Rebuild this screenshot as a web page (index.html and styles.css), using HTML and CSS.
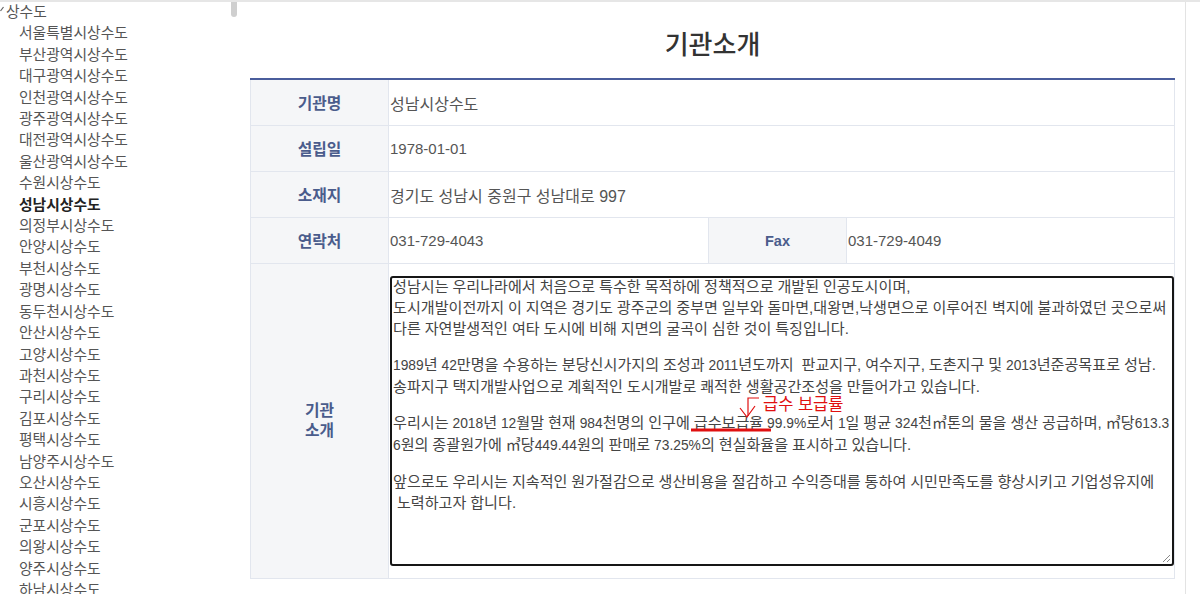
FILE: index.html
```html
<!DOCTYPE html>
<html lang="ko">
<head>
    <meta charset="UTF-8">
    <meta name="viewport" content="width=device-width, initial-scale=1.0">
    <title>기관소개</title>
    <link rel="stylesheet" href="styles.css">
</head>
<body>
    <div class="page">
        <aside class="tree">
            <ul class="tree-list">
                <li class="tree-root"><svg class="caret" width="5" height="8" viewBox="0 0 5 8"><path d="M0.5 6 L3.5 2" stroke="#666" stroke-width="1.2" fill="none"/></svg>상수도
                    <ul>
                        <li>서울특별시상수도</li>
                        <li>부산광역시상수도</li>
                        <li>대구광역시상수도</li>
                        <li>인천광역시상수도</li>
                        <li>광주광역시상수도</li>
                        <li>대전광역시상수도</li>
                        <li>울산광역시상수도</li>
                        <li>수원시상수도</li>
                        <li class="active">성남시상수도</li>
                        <li>의정부시상수도</li>
                        <li>안양시상수도</li>
                        <li>부천시상수도</li>
                        <li>광명시상수도</li>
                        <li>동두천시상수도</li>
                        <li>안산시상수도</li>
                        <li>고양시상수도</li>
                        <li>과천시상수도</li>
                        <li>구리시상수도</li>
                        <li>김포시상수도</li>
                        <li>평택시상수도</li>
                        <li>남양주시상수도</li>
                        <li>오산시상수도</li>
                        <li>시흥시상수도</li>
                        <li>군포시상수도</li>
                        <li>의왕시상수도</li>
                        <li>양주시상수도</li>
                        <li>하남시상수도</li>
                    </ul>
                </li>
            </ul>
            <div class="scroll-thumb"></div>
        </aside>

        <main class="main">
            <h1 class="title">기관소개</h1>
            <table class="info">
                <colgroup>
                    <col class="col-label">
                    <col class="col-value">
                    <col class="col-label">
                    <col>
                </colgroup>
                <tr>
                    <th>기관명</th>
                    <td colspan="3">성남시상수도</td>
                </tr>
                <tr>
                    <th>설립일</th>
                    <td colspan="3" class="num">1978-01-01</td>
                </tr>
                <tr>
                    <th>소재지</th>
                    <td colspan="3">경기도 성남시 중원구 성남대로 997</td>
                </tr>
                <tr>
                    <th>연락처</th>
                    <td class="num">031-729-4043</td>
                    <th class="latin">Fax</th>
                    <td class="num">031-729-4049</td>
                </tr>
                <tr class="intro">
                    <th>기관<br>소개</th>
                    <td colspan="3">
                        <div class="memo">
                            <div class="memo-box">
                                <p>성남시는 우리나라에서 처음으로 특수한 목적하에 정책적으로 개발된 인공도시이며,<br>도시개발이전까지 이 지역은 경기도 광주군의 중부면 일부와 돌마면,대왕면,낙생면으로 이루어진 벽지에 불과하였던 곳으로써<br>다른 자연발생적인 여타 도시에 비해 지면의 굴곡이 심한 것이 특징입니다.</p>
                                <p><span class="num">1989</span>년 <span class="num">42</span>만명을 수용하는 분당신시가지의 조성과 <span class="num">2011</span>년도까지&nbsp; 판교지구, 여수지구, 도촌지구 및 <span class="num">2013</span>년준공목표로 성남.<br>송파지구 택지개발사업으로 계획적인 도시개발로 쾌적한 생활공간조성을 만들어가고 있습니다.</p>
                                <p>우리시는 <span class="num">2018</span>년 <span class="num">12</span>월말 현재 <span class="num">984</span>천명의 인구에 급수보급율 <span class="num">99.9%</span>로서 <span class="num">1</span>일 평균 <span class="num">324</span>천㎥톤의 물을 생산 공급하며, ㎥당<span class="num">613.3</span><br><span class="num">6</span>원의 종괄원가에 ㎥당<span class="num">449.44</span>원의 판매로 <span class="num">73.25%</span>의 현실화율을 표시하고 있습니다.</p>
                                <p>앞으로도 우리시는 지속적인 원가절감으로 생산비용을 절감하고 수익증대를 통하여 시민만족도를 향상시키고 기업성유지에<br>&nbsp;노력하고자 합니다.</p>
                            </div>
                            <!-- red correction marks drawn over the text -->
                            <svg class="marks" width="785" height="290" viewBox="0 0 785 290">
                                <path d="M301 154 H381" stroke="#e01010" stroke-width="3" fill="none"/>
                                <path d="M369 122 H358 V140" stroke="#e01010" stroke-width="1.2" fill="none"/>
                                <path d="M350 132 L357 141 L365 130" stroke="#e01010" stroke-width="1.2" fill="none"/>
                            </svg>
                            <span class="note">급수 보급률</span>
                            <svg class="grip" width="9" height="9" viewBox="0 0 9 9">
                                <path d="M1 8 L8 1 M5 8 L8 5" stroke="#888" stroke-width="1" fill="none"/>
                            </svg>
                        </div>
                    </td>
                </tr>
            </table>
        </main>
    </div>
</body>
</html>
```

FILE: styles.css
```css
body {
    margin: 0;
    font-family: "Liberation Sans", "Noto Sans CJK KR", sans-serif;
    color: #444;
    background: #fff;
    border-top: 2px solid #e6e6e6;
    height: 592px;
    overflow: hidden;
}
.page {
    display: flex;
    height: 592px;
}
.tree {
    width: 238px;
    flex: none;
    position: relative;
    overflow: hidden;
}
.tree ul {
    list-style: none;
    margin: 0;
    padding: 0;
}
.tree-list {
    margin-top: -7px;
    font-size: 14.8px;
    line-height: 21.4px;
    color: #555;
}
.tree-root {
    padding-left: 7px;
}
.tree-root ul {
    padding-left: 12px;
}
.caret {
    margin-left: -7px;
    margin-right: 1px;
    vertical-align: 4px;
}
.tree .active {
    font-weight: bold;
    color: #222;
}
.scroll-thumb {
    position: absolute;
    top: 0;
    right: 1px;
    width: 6px;
    height: 15px;
    background: #cfcfcf;
    border-radius: 0 0 3px 3px;
}
.main {
    width: 948px;
    flex: none;
    box-sizing: border-box;
    padding-left: 12px;
    border-right: 1px solid #e3e3e3;
}
.title {
    width: 925px;
    margin: 0 0 17px;
    padding-top: 27px;
    font-size: 26px;
    font-weight: 500;
    line-height: 32px;
    color: #333;
    text-align: center;
}
.info {
    width: 925px;
    border-collapse: collapse;
    table-layout: fixed;
    border-top: 2px solid #4a5d9c;
}
.col-label {
    width: 138px;
}
.col-value {
    width: 320px;
}
.info th {
    height: 45px;
    padding: 0;
    background: #f5f6f8;
    border: 1px solid #e2e6ee;
    color: #4a5c8c;
    font-size: 15.8px;
    font-weight: bold;
    text-align: center;
}
.info th.latin {
    font-size: 14.5px;
}
.info td {
    height: 45px;
    padding: 0 0 0 1px;
    border: 1px solid #e2e6ee;
    color: #555;
    font-size: 16px;
}
.info td.num {
    font-size: 15px;
}
.info .intro th {
    line-height: 20px;
}
.info .intro td {
    padding: 12px 0 12px 1px;
}
.memo {
    position: relative;
}
.memo-box {
    height: 290px;
    box-sizing: border-box;
    padding: 0 1px;
    border: 2px solid #161616;
    border-radius: 3px;
    font-size: 15.1px;
    line-height: 21px;
    word-spacing: -0.3px;
    color: #444;
    white-space: nowrap;
    overflow: hidden;
}
.memo-box p {
    margin: 0 0 15px;
}
.memo-box p:first-child {
    margin-top: -2px;
}
.memo-box .num {
    font-size: 13.8px;
}
.marks {
    position: absolute;
    top: 0;
    left: 0;
    pointer-events: none;
}
.note {
    position: absolute;
    top: 118px;
    left: 373px;
    font-size: 16.5px;
    line-height: 20px;
    color: #e01010;
}
.grip {
    position: absolute;
    right: 3px;
    bottom: 3px;
}
```
